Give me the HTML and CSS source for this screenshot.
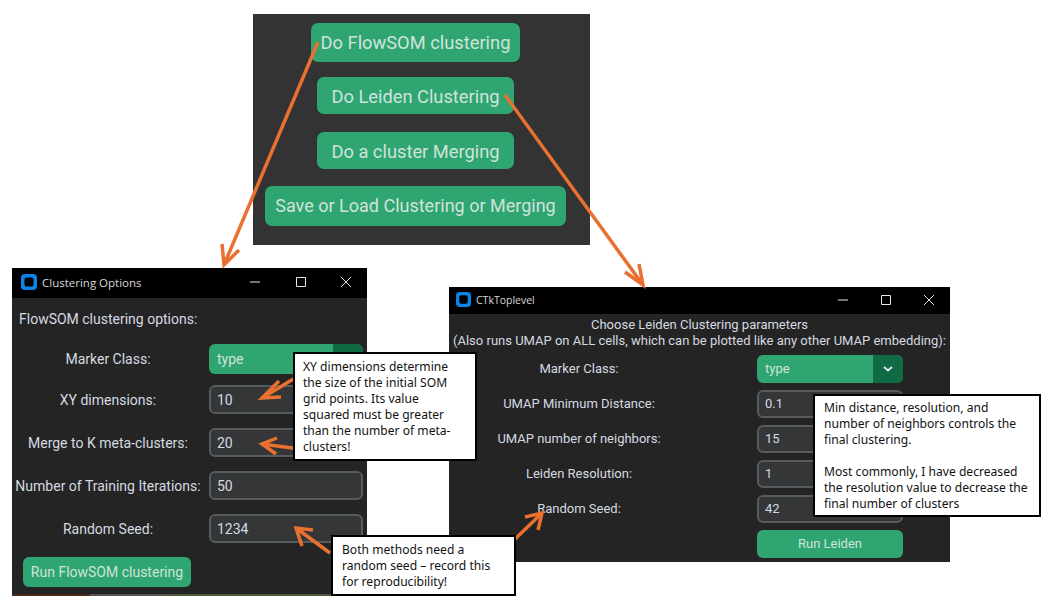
FILE: index.html
```html
<!DOCTYPE html>
<html lang="en">

<head>
    <meta charset="UTF-8">
    <meta name="viewport" content="width=device-width, initial-scale=1.0">
    <title>Clustering options</title>
    <link rel="stylesheet" href="styles.css">
</head>

<body>
    <div class="menu">
        <div class="menu-btn btn-flowsom">Do FlowSOM clustering</div>
        <div class="menu-btn btn-leiden">Do Leiden Clustering</div>
        <div class="menu-btn btn-merge">Do a cluster Merging</div>
        <div class="menu-btn btn-save">Save or Load Clustering or Merging</div>
    </div>

    <div class="window win-flowsom">
        <div class="titlebar">
            <svg class="app-icon" viewBox="0 0 16 16">
                <path fill="#0a84e8" fill-rule="evenodd" d="M4 0h8a4 4 0 0 1 4 4v8a4 4 0 0 1-4 4H4a4 4 0 0 1-4-4V4a4 4 0 0 1 4-4zM5.500 3.500a2 2 0 0 0-2 2v5a2 2 0 0 0 2 2h5a2 2 0 0 0 2-2v-5a2 2 0 0 0-2-2z" />
            </svg>
            <span class="title">Clustering Options</span>
            <div class="controls">
                <svg viewBox="0 0 10 10"><path d="M0 5h10" /></svg>
                <svg viewBox="0 0 10 10"><path d="M.5.500h9v9h-9z" /></svg>
                <svg viewBox="0 0 10 10"><path d="M0 0l10 10M10 0L0 10" /></svg>
            </div>
        </div>
        <div class="win-body">
            <div class="heading">FlowSOM clustering options:</div>
            <div class="form">
                <div class="label">Marker Class:</div>
                <div class="dropdown">
                    <span class="drop-value">type</span>
                    <span class="drop-arrow"></span>
                </div>
                <div class="label">XY dimensions:</div>
                <div class="entry">10</div>
                <div class="label">Merge to K meta-clusters:</div>
                <div class="entry">20</div>
                <div class="label">Number of Training Iterations:</div>
                <div class="entry">50</div>
                <div class="label">Random Seed:</div>
                <div class="entry">1234</div>
            </div>
            <div class="run-btn">Run FlowSOM clustering</div>
        </div>
    </div>

    <div class="window win-leiden">
        <div class="titlebar">
            <svg class="app-icon" viewBox="0 0 16 16">
                <path fill="#0a84e8" fill-rule="evenodd" d="M4 0h8a4 4 0 0 1 4 4v8a4 4 0 0 1-4 4H4a4 4 0 0 1-4-4V4a4 4 0 0 1 4-4zM5.500 3.500a2 2 0 0 0-2 2v5a2 2 0 0 0 2 2h5a2 2 0 0 0 2-2v-5a2 2 0 0 0-2-2z" />
            </svg>
            <span class="title">CTkToplevel</span>
            <div class="controls">
                <svg viewBox="0 0 10 10"><path d="M0 5h10" /></svg>
                <svg viewBox="0 0 10 10"><path d="M.5.500h9v9h-9z" /></svg>
                <svg viewBox="0 0 10 10"><path d="M0 0l10 10M10 0L0 10" /></svg>
            </div>
        </div>
        <div class="win-body">
            <div class="heading">Choose Leiden Clustering parameters<br>(Also runs UMAP on ALL cells, which can be plotted like any other UMAP embedding):</div>
            <div class="form">
                <div class="label">Marker Class:</div>
                <div class="dropdown">
                    <span class="drop-value">type</span>
                    <span class="drop-arrow">
                        <svg viewBox="0 0 10 6"><path d="M1 1l4 3.500L9 1" /></svg>
                    </span>
                </div>
                <div class="label">UMAP Minimum Distance:</div>
                <div class="entry">0.1</div>
                <div class="label">UMAP number of neighbors:</div>
                <div class="entry">15</div>
                <div class="label">Leiden Resolution:</div>
                <div class="entry">1</div>
                <div class="label">Random Seed:</div>
                <div class="entry">42</div>
                <div class="label"></div>
                <div class="run-btn">Run Leiden</div>
            </div>
        </div>
    </div>

    <!-- arrows lie over both windows -->
    <svg class="arrows" viewBox="0 0 1057 604">
        <path d="M318 42L224 265M222 244L224 265L239 250" />
        <path d="M505 95L643 285M625 272L643 285L639 264" />
        <path d="M295 378L262 398M279 381L262 398L281 397" />
        <path d="M300 449L262 444M277 438L262 444L276 454" />
        <path d="M330 553L296 528M313 530L296 528L302 546" />
        <path d="M513 541L542 513M525 517L542 513L538 530" />
    </svg>

    <div class="note note-xy">XY dimensions determine<br>the size of the initial SOM<br>grid points. Its value<br>squared must be greater<br>than the number of meta-<br>clusters!</div>
    <div class="note note-seed">Both methods need a<br>random seed – record this<br>for reproducibility!</div>
    <div class="note note-min">Min distance, resolution, and<br>number of neighbors controls the<br>final clustering.<br><br>Most commonly, I have decreased<br>the resolution value to decrease the<br>final number of clusters</div>
</body>

</html>
```

FILE: styles.css
```css
* {
    margin: 0;
    padding: 0;
    box-sizing: border-box;
}

html,
body {
    height: 100%;
    overflow: hidden;
}

body {
    position: relative;
    background-color: #fff;
    font-family: Roboto, "Liberation Sans", sans-serif;
}

/* top panel */
.menu {
    position: absolute;
    left: 253px;
    top: 14px;
    width: 337px;
    height: 231px;
    padding: 9px 12px 0 0;
    background-color: #333;
    display: flex;
    flex-direction: column;
    align-items: center;
}

.menu-btn {
    display: flex;
    align-items: center;
    justify-content: center;
    border-radius: 7px;
    background-color: #2fa572;
    color: #cfe3dc;
    font-size: 18.300px;
    white-space: nowrap;
}

.btn-flowsom {
    width: 209px;
    height: 39px;
}

.btn-leiden,
.btn-merge {
    width: 197px;
    height: 37px;
    padding-top: 1px;
}

.btn-leiden {
    margin-top: 15px;
}

.btn-merge {
    margin-top: 18px;
}

.btn-save {
    width: 301px;
    height: 40px;
    margin-top: 17px;
    padding-bottom: 1px;
    font-size: 18px;
}

/* windows */
.window {
    position: absolute;
    display: flex;
    flex-direction: column;
    background-color: #242424;
    color: #d4dae0;
}

.win-flowsom {
    left: 12px;
    top: 268px;
    width: 355px;
    height: 328px;
    border-bottom: 2px solid #000;
    border-image: linear-gradient(90deg, #4a2a1a 0 22%, #555 22% 43%, #4a5a3a 43% 90%, #8a8a80 90%) 1;
}

.win-leiden {
    left: 449px;
    top: 287px;
    width: 501px;
    height: 275px;
}

.titlebar {
    display: flex;
    align-items: center;
    flex-shrink: 0;
    padding-bottom: 2px;
    background-color: #000;
    color: #d8d8d8;
    font-family: "Open Sans", sans-serif;
}

.win-flowsom .titlebar {
    height: 30px;
    padding-left: 9px;
    padding-right: 16px;
    font-size: 11.500px;
}

.win-leiden .titlebar {
    height: 27px;
    padding-left: 7px;
    padding-right: 16px;
    font-size: 10.500px;
}

.app-icon {
    width: 16px;
    height: 16px;
    margin-right: 5px;
}

.win-leiden .app-icon {
    width: 15px;
    height: 15px;
}

.controls {
    display: flex;
    margin-left: auto;
    gap: 35.500px;
}

.win-leiden .controls {
    gap: 33px;
}

.controls svg {
    width: 10px;
    height: 10px;
    fill: none;
    stroke: #e6e6e6;
    stroke-width: 1;
}

.win-flowsom .heading {
    padding: 12px 0 0 7px;
    line-height: 18px;
    height: 46px;
    font-size: 14px;
}

.win-leiden .heading {
    padding-top: 3px;
    line-height: 16px;
    height: 41px;
    font-size: 13px;
    text-align: center;
    white-space: nowrap;
}

.form {
    display: grid;
    align-items: center;
}

.win-flowsom .form {
    grid-template-columns: 188px 154px;
    column-gap: 7px;
    row-gap: 14px;
    padding-left: 2px;
}

.win-leiden .form {
    grid-template-columns: 260px 146px;
    column-gap: 48px;
    row-gap: 7px;
}

.label {
    text-align: center;
    font-size: 14px;
    white-space: nowrap;
}

.win-flowsom .label:first-child {
    padding-top: 3px;
}

.win-leiden .label {
    padding-bottom: 2px;
    font-size: 13px;
}

.dropdown {
    display: flex;
    height: 30px;
    border-radius: 6px;
    overflow: hidden;
    background-color: #2fa572;
    color: #cfe3dc;
    font-size: 14px;
}

.win-flowsom .dropdown {
    margin-bottom: -3px;
}

.win-leiden .dropdown {
    height: 28px;
    font-size: 13px;
}

.drop-value {
    flex: 1;
    display: flex;
    align-items: center;
    padding-left: 8px;
}

.win-leiden .drop-value {
    padding-bottom: 1px;
}

.drop-arrow {
    display: flex;
    align-items: center;
    justify-content: center;
    width: 30px;
    background-color: #106a43;
}

.drop-arrow svg {
    width: 10px;
    height: 6px;
    fill: none;
    stroke: #dce4ee;
    stroke-width: 2;
}

.entry {
    display: flex;
    align-items: center;
    height: 29px;
    padding-left: 6px;
    border: 2px solid #565b5e;
    border-radius: 6px;
    background-color: #343638;
    font-size: 14px;
}

.win-leiden .entry {
    height: 28px;
    padding-bottom: 1px;
    font-size: 13px;
}

.run-btn {
    display: flex;
    align-items: center;
    justify-content: center;
    border-radius: 6px;
    background-color: #2fa572;
    color: #cfe3dc;
    font-size: 14px;
    white-space: nowrap;
}

.win-flowsom .run-btn {
    width: 168px;
    height: 30px;
    margin: 14px 0 0 11px;
}

.win-leiden .run-btn {
    height: 28px;
    padding-bottom: 1px;
    font-size: 13px;
}

/* annotations */
.arrows {
    position: absolute;
    left: 0;
    top: 0;
    width: 1057px;
    height: 604px;
    fill: none;
    stroke: #e9702f;
    stroke-width: 3.500;
}

.note {
    position: absolute;
    border: 2px solid #000;
    background-color: #fff;
    color: #111;
    font-family: "Noto Sans", sans-serif;
    font-size: 12.100px;
    line-height: 16px;
    white-space: nowrap;
}

.note-xy {
    left: 293px;
    top: 352px;
    width: 184px;
    height: 109px;
    padding: 5px 0 0 8px;
}

.note-seed {
    left: 331px;
    top: 535px;
    width: 185px;
    height: 61px;
    padding: 5px 0 0 9px;
}

.note-min {
    left: 813px;
    top: 394px;
    width: 228px;
    height: 123px;
    padding: 4px 0 0 9px;
}
```
